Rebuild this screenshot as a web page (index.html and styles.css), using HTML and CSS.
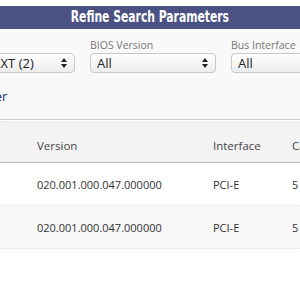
FILE: index.html
```html
<!DOCTYPE html>
<html>
<head>
<meta charset="utf-8">
<link rel="stylesheet" href="styles.css">
</head>
<body>
<div class="page">
  <div class="panel-title"><span class="title-text">Refine Search Parameters</span></div>
  <div class="filters">
    <div class="filter">
      <div class="label">Product</div>
      <div class="select"><span class="val">RX 580 XT (2)</span><svg class="arrows" width="6" height="10" viewBox="0 0 6 10"><path d="M3 0L6 4H0Z M0 6H6L3 10Z" fill="#222"/></svg></div>
    </div>
    <div class="filter">
      <div class="label">BIOS Version</div>
      <div class="select"><span class="val">All</span><svg class="arrows" width="6" height="10" viewBox="0 0 6 10"><path d="M3 0L6 4H0Z M0 6H6L3 10Z" fill="#222"/></svg></div>
    </div>
    <div class="filter">
      <div class="label">Bus Interface</div>
      <div class="select"><span class="val">All</span><svg class="arrows" width="6" height="10" viewBox="0 0 6 10"><path d="M3 0L6 4H0Z M0 6H6L3 10Z" fill="#222"/></svg></div>
    </div>
  </div>
  <div class="links"><a class="link" href="#">Reset Filter</a></div>
  <div class="results">
    <div class="row head">
      <div class="c c0">Name</div>
      <div class="c c1">Version</div>
      <div class="c c2">Interface</div>
      <div class="c c3">Card</div>
    </div>
    <div class="row">
      <div class="c c0">BIOS</div>
      <div class="c c1">020.001.000.047.000000</div>
      <div class="c c2">PCI-E</div>
      <div class="c c3">5</div>
    </div>
    <div class="row alt">
      <div class="c c0">BIOS</div>
      <div class="c c1">020.001.000.047.000000</div>
      <div class="c c2">PCI-E</div>
      <div class="c c3">5</div>
    </div>
  </div>
</div>
</body>
</html>
```
FILE: styles.css
```css
html, body {
  margin: 0;
  padding: 0;
  background: #ffffff;
  overflow: hidden;
}
.page {
  width: 300px;
  font-family: "Open Sans", "DejaVu Sans", sans-serif;
  color: #333;
  padding-top: 6px;
}
.panel-title {
  background: #4b5283;
  color: #fff;
  height: 23px;
  line-height: 23px;
  text-align: center;
  font-family: "DejaVu Sans Condensed", "DejaVu Sans", sans-serif;
  font-weight: bold;
  font-size: 15px;
}
.title-text {
  display: inline-block;
  transform: scaleX(0.8);
  white-space: nowrap;
}
.filters {
  background: #f9f9f9;
  display: flex;
  gap: 15px;
  margin-left: -51px;
  padding-top: 9px;
  width: 420px;
}
.filter {
  width: 126px;
  flex: none;
}
.label {
  font-size: 10.5px;
  color: #777;
  height: 14px;
  line-height: 14px;
  white-space: nowrap;
}
.select {
  margin-top: 1px;
  height: 18px;
  border: 1px solid #c9c9c9;
  border-radius: 4px;
  background: linear-gradient(#ffffff, #ececec);
  display: flex;
  align-items: center;
  padding: 0 7px 0 6px;
  font-size: 13px;
  color: #222;
}
.arrows {
  flex: none;
  margin-left: 4px;
}
.val {
  flex: 1;
  white-space: nowrap;
  overflow: hidden;
}
.links {
  background: #f9f9f9;
  height: 46px;
  border-bottom: 1px solid #cfcfcf;
}
.link {
  display: block;
  margin-left: -60px;
  padding-top: 14px;
  font-size: 13px;
  line-height: 18px;
  color: #232a78;
  text-decoration: none;
  white-space: nowrap;
}
.results {
  margin-top: 1px;
  border-top: 1px dotted #e6e6e6;
}
.row {
  display: flex;
  height: 43px;
  align-items: center;
  font-size: 11px;
  border-bottom: 1px dotted #e4e4e4;
  margin-left: -120px;
  width: 500px;
  box-sizing: border-box;
}
.row.head {
  background: #f3f3f3;
  height: 41px;
  padding-top: 7px;
  border-bottom: 1px solid #b5b5b5;
  font-size: 11.5px;
  color: #444;
}
.row.alt {
  background: #f7f7f7;
  height: 43px;
}
.c {
  flex: none;
  white-space: nowrap;
}
.c0 { width: 157px; }
.c1 { width: 176px; }
.c2 { width: 79px; }
.c3 { width: 60px; }
```
